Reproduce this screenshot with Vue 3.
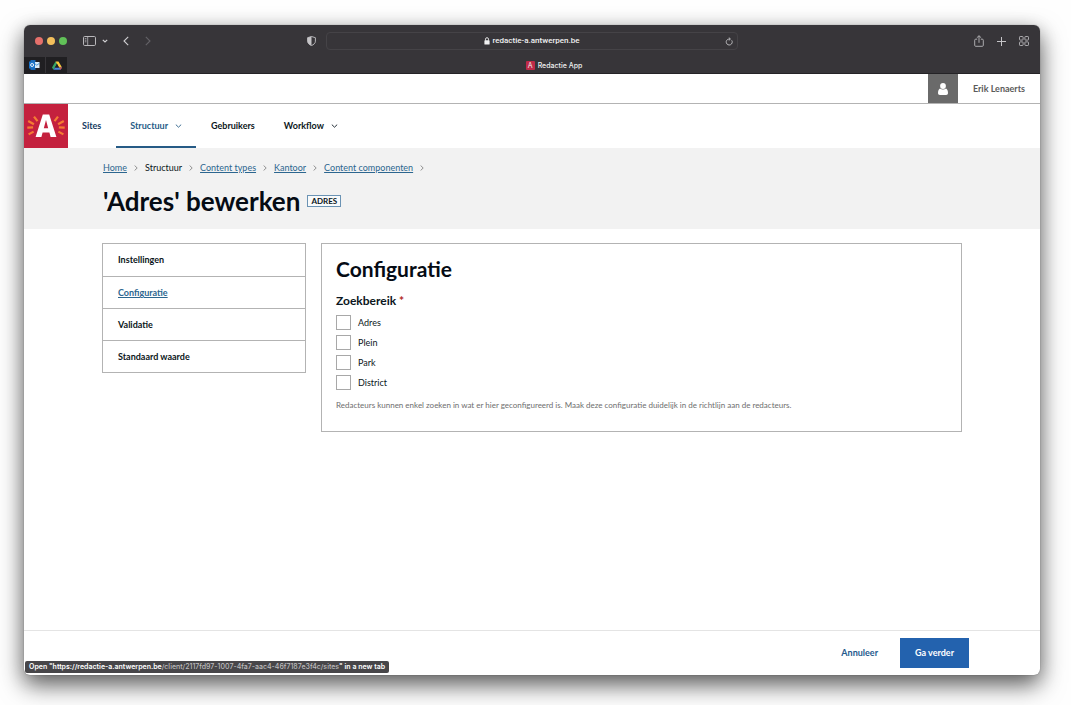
<script setup>
import { ref } from 'vue'

const navItems = [
  { label: 'Sites', tone: 'dark-blue' },
  { label: 'Structuur', tone: 'blue', active: true, menu: true },
  { label: 'Gebruikers' },
  { label: 'Workflow', menu: true },
]
const crumbs = [
  { label: 'Home', link: true },
  { label: 'Structuur' },
  { label: 'Content types', link: true },
  { label: 'Kantoor', link: true },
  { label: 'Content componenten', link: true },
]
const sections = ['Instellingen', 'Configuratie', 'Validatie', 'Standaard waarde']
const current = 'Configuratie'
const options = ['Adres', 'Plein', 'Park', 'District']
const chosen = ref([])
</script>

<template>
  <div class="desktop">
    <div class="window">
      <div class="toolbar">
        <div class="tools-left">
          <div class="lights"><i class="red"></i><i class="yellow"></i><i class="green"></i></div>
          <button class="tool sidebar-tool" aria-label="Sidebar">
            <svg width="13" height="10" viewBox="0 0 13 10" fill="none" stroke="#b9b8bb"><rect x=".5" y=".5" width="12" height="9" rx="1.2" /><path d="M4.7.5v9M1.8 2.6h1.6M1.8 4.2h1.6M1.8 5.8h1.6" stroke-width=".8" /></svg>
          </button>
          <button class="tool menu-tool" aria-label="Tab groups">
            <svg width="6" height="4" viewBox="0 0 6 4" fill="none" stroke="#d2d1d4" stroke-width="1.2"><path d="M.8.8 3 3 5.2.8" /></svg>
          </button>
          <button class="tool back-tool" aria-label="Back">
            <svg width="6" height="10" viewBox="0 0 6 10" fill="none" stroke="#cfced1" stroke-width="1.1"><path d="M5.2.8 1 5l4.2 4.2" /></svg>
          </button>
          <button class="tool" aria-label="Forward">
            <svg width="6" height="10" viewBox="0 0 6 10" fill="none" stroke="#646267" stroke-width="1.1"><path d="M.8.8 5 5 .8 9.2" /></svg>
          </button>
        </div>
        <div class="address-area">
          <svg class="shield" width="9" height="10" viewBox="0 0 9 10"><path d="M4.5.5 8.4 1.7v3.5c0 2-1.8 3.5-3.9 4.4C2.4 8.7.6 7.2.6 5.2V1.7z" fill="none" stroke="#c5c4c7" stroke-width=".9" /><path d="M4.5.5v9.1C2.4 8.7.6 7.2.6 5.2V1.7z" fill="#c5c4c7" /></svg>
          <div class="address">
            <span class="host">
              <svg width="6" height="8" viewBox="0 0 6 8"><rect x=".4" y="3.3" width="5.2" height="4.3" rx=".6" fill="#f0f0f1" /><path d="M1.5 3.6V2.2a1.5 1.5 0 0 1 3 0v1.4" fill="none" stroke="#f0f0f1" stroke-width=".9" /></svg>
              redactie-a.antwerpen.be
            </span>
            <button class="tool" aria-label="Reload">
              <svg width="8" height="9" viewBox="0 0 8 9" fill="none" stroke="#c5c4c7" stroke-width=".9"><path d="M6.7 3.3A3 3 0 1 1 4 2h1.2M3.8.5 5.4 2 3.8 3.5" /></svg>
            </button>
          </div>
        </div>
        <div class="tools-right">
          <button class="tool" aria-label="Share">
            <svg width="10" height="12" viewBox="0 0 10 12" fill="none" stroke="#b9b8bb" stroke-width=".9"><path d="M3.2 4.2H1.7a1 1 0 0 0-1 1v5.1a1 1 0 0 0 1 1h6.6a1 1 0 0 0 1-1V5.2a1 1 0 0 0-1-1H6.8M5 7.8V.8M2.8 2.8 5 .7l2.2 2.1" /></svg>
          </button>
          <button class="tool" aria-label="New tab">
            <svg width="9" height="9" viewBox="0 0 9 9" stroke="#c5c4c7"><path d="M4.5 0v9M0 4.5h9" /></svg>
          </button>
          <button class="tool" aria-label="Tab overview">
            <svg width="10" height="10" viewBox="0 0 10 10" fill="none" stroke="#b9b8bb" stroke-width=".9"><rect x=".5" y=".5" width="3.6" height="3.6" rx=".7" /><rect x="5.9" y=".5" width="3.6" height="3.6" rx=".7" /><rect x=".5" y="5.9" width="3.6" height="3.6" rx=".7" /><rect x="5.9" y="5.9" width="3.6" height="3.6" rx=".7" /></svg>
          </button>
        </div>
      </div>

      <div class="tabbar">
        <button class="pinned" aria-label="Outlook">
          <svg width="11" height="10" viewBox="0 0 11 10"><rect x="1.5" y="0" width="5" height="10" fill="#1767b5" /><rect x="5" y="2" width="5.5" height="6" fill="#d9ecfa" /><path d="m5 3.2 2.8 2 2.7-2" fill="none" stroke="#2c80c8" stroke-width=".8" /><rect x="0" y="1.5" width="6" height="7" fill="#1b73c7" /><circle cx="3.1" cy="5" r="1.5" fill="none" stroke="#fff" stroke-width=".9" /></svg>
        </button>
        <button class="pinned" aria-label="Drive">
          <svg width="10" height="9" viewBox="0 0 10 9"><path d="M3.5.5 0 6.4l1.5 2.3L5 2.8z" fill="#36a466" /><path d="M3.5.5h3L10 6.4H7z" fill="#f9c83c" /><path d="M1.5 8.7h7L10 6.4H3z" fill="#4485df" /><path d="M5 2.8 3 6.4h4z" fill="#201f22" /><path d="M7 6.4h3L8.5 8.7z" fill="#df5243" /></svg>
        </button>
        <div class="tab"><span class="favicon">A</span>Redactie App</div>
      </div>

      <div class="userbar">
        <span class="avatar">
          <svg width="10" height="12" viewBox="0 0 10 12" fill="#fff"><circle cx="5" cy="3" r="2.9" /><path d="M2 5.4c1.6 1.5 4.4 1.5 6 0 1.4.7 2 2.3 2 4.7 0 1.2-.7 1.9-1.9 1.9H1.9C.7 12 0 11.3 0 10.1c0-2.4.6-4 2-4.7z" /></svg>
        </span>
        <span class="user">Erik Lenaerts</span>
      </div>

      <header class="mainbar">
        <a href="#" class="logo" aria-label="Antwerpen">
          <svg width="44" height="44" viewBox="0 0 44 44"><rect width="44" height="44" fill="#c4213e" /><path d="m11.6 33 7.2-22.6h6.4L32.4 33h-5.8l-1.2-4.4h-6.8L17.4 33zm8.2-8.8h4.4L22 16z" fill="#fff" fill-rule="evenodd" /><path d="m10 12.6 3.5 4.6M4.2 17l5.7 3.3M3.3 23.6l5.8-.3M4.6 30.4l5-2.8M34 12.6l-3.5 4.6M39.8 17l-5.7 3.3M40.7 23.6l-5.8-.3M39.4 30.4l-5-2.8" stroke="#f57c33" stroke-width="2.2" /></svg>
        </a>
        <nav class="nav">
          <a v-for="item in navItems" :key="item.label" href="#" :class="['nav-item', item.tone, { active: item.active }]">
            {{ item.label }}
            <svg v-if="item.menu" width="7" height="4" viewBox="0 0 7 4" fill="none" stroke="currentColor" stroke-width=".9"><path d="m.8.6 2.7 2.6L6.2.6" /></svg>
          </a>
        </nav>
      </header>

      <div class="page-head">
        <nav class="crumbs" aria-label="Breadcrumb">
          <span v-for="crumb in crumbs" :key="crumb.label" class="crumb">
            <a v-if="crumb.link" href="#">{{ crumb.label }}</a>
            <span v-else>{{ crumb.label }}</span>
            <svg width="4" height="6" viewBox="0 0 4 6" fill="none" stroke="#777" stroke-width=".8"><path d="M.6.5 3.2 3 .6 5.5" /></svg>
          </span>
        </nav>
        <div class="title-row">
          <h1>'Adres' bewerken</h1>
          <span class="badge">ADRES</span>
        </div>
      </div>

      <main class="content">
        <nav class="side">
          <a v-for="section in sections" :key="section" href="#" :class="{ current: section === current }">{{ section }}</a>
        </nav>
        <section class="panel">
          <h2>Configuratie</h2>
          <fieldset>
            <legend>Zoekbereik <span class="required">*</span></legend>
            <label v-for="option in options" :key="option" class="option">
              <input v-model="chosen" type="checkbox" :value="option" />{{ option }}
            </label>
          </fieldset>
          <p class="hint">Redacteurs kunnen enkel zoeken in wat er hier geconfigureerd is. Maak deze configuratie duidelijk in de richtlijn aan de redacteurs.</p>
        </section>
      </main>

      <footer class="actions">
        <button class="cancel">Annuleer</button>
        <button class="next">Ga verder</button>
      </footer>

      <div class="status">Open "https://redactie-a.antwerpen.be<span>/client/2117fd97-1007-4fa7-aac4-46f7187e3f4c/sites</span>" in a new tab</div>
    </div>
  </div>
</template>

<style>
body {
  margin: 0;
  background: #fefefe;
}
</style>

<style scoped>
* {
  box-sizing: border-box;
}
button {
  padding: 0;
  border: 0;
  background: none;
  font: inherit;
  color: inherit;
}
svg {
  display: block;
  flex: none;
}
.desktop {
  display: flex;
  height: 100vh;
  padding: 25px 31px 30px 24px;
  overflow: hidden;
  font-family: Lato, "Open Sans", sans-serif;
  font-size: 9px;
  line-height: 12px;
  color: #0b1620;
}
.window {
  position: relative;
  display: flex;
  flex: 1;
  flex-direction: column;
  min-width: 0;
  border-radius: 6px;
  background: #fff;
  box-shadow: 0 0 1px rgba(0, 0, 0, 0.5), 0 10px 24px rgba(0, 0, 0, 0.6), 0 4px 18px rgba(0, 0, 0, 0.15);
}
.toolbar {
  display: grid;
  grid-template-columns: 1fr 450px 1fr;
  align-items: center;
  height: 32px;
  padding: 0 11px;
  border-radius: 6px 6px 0 0;
  background: #373539;
}
.tool {
  display: flex;
  align-items: center;
}
.tools-left,
.tools-right,
.lights,
.address-area {
  display: flex;
  align-items: center;
}
.lights {
  gap: 4px;
}
.lights i {
  width: 8px;
  height: 8px;
  border-radius: 50%;
}
.red {
  background: #e5706b;
}
.yellow {
  background: #f3bf5c;
}
.green {
  background: #61c158;
}
.sidebar-tool {
  margin-left: 16px;
}
.menu-tool {
  margin-left: 6px;
}
.back-tool {
  margin: 0 16px 0 15px;
}
.address-area {
  gap: 10px;
  padding-right: 19px;
}
.address {
  display: flex;
  flex: 1;
  align-items: center;
  height: 18px;
  padding: 0 4px 0 11px;
  border: 1px solid #454347;
  border-radius: 4px;
}
.host {
  display: flex;
  flex: 1;
  align-items: center;
  justify-content: center;
  gap: 3px;
  font: 500 8px/12px Roboto, sans-serif;
  color: #f0f0f1;
}
.tools-right {
  justify-content: flex-end;
  gap: 13px;
}
.tabbar {
  display: flex;
  align-items: stretch;
  height: 17px;
  background: #373539;
  border-bottom: 1px solid #242326;
}
.pinned {
  display: flex;
  align-items: center;
  justify-content: center;
  width: 22px;
  background: #201f22;
  border-right: 1px solid #373539;
}
.tab {
  display: flex;
  flex: 1;
  align-items: center;
  justify-content: center;
  gap: 3px;
  padding-top: 1px;
  font: 500 7px/10px Inter, sans-serif;
  color: #f0f0f1;
}
.favicon {
  width: 9px;
  border-radius: 1px;
  background: #bf2a48;
  text-align: center;
  font-weight: 400;
  line-height: 9px;
}
.userbar {
  display: flex;
  justify-content: flex-end;
  height: 30px;
  border-bottom: 1px solid #b3b3b3;
}
.avatar {
  display: flex;
  align-items: center;
  justify-content: center;
  width: 30px;
  background: #6a6a6a;
}
.user {
  padding: 0 15px;
  font-weight: 700;
  line-height: 29px;
  color: #5b5b5b;
}
.mainbar {
  display: flex;
  height: 44px;
}
.nav {
  display: flex;
  gap: 1px;
}
.nav-item {
  display: flex;
  align-items: center;
  gap: 7px;
  padding: 2px 14px 0;
  border-bottom: 2px solid transparent;
  font-weight: 700;
  color: #0b1620;
  text-decoration: none;
}
.dark-blue {
  color: #143a61;
}
.blue {
  color: #265b86;
}
.active {
  border-color: #265b86;
}
.page-head {
  height: 81px;
  padding: 14px 79px 0;
  background: #f2f2f2;
}
.crumbs,
.crumb {
  display: flex;
  align-items: center;
  gap: 7px;
}
.crumb a {
  color: #2c668f;
}
.title-row {
  display: flex;
  align-items: center;
  gap: 7px;
  margin-top: 11px;
}
h1,
h2 {
  margin: 0;
  font-size: 26px;
  line-height: 32px;
  font-weight: 700;
  color: #050b14;
}
.badge {
  padding: 0 3px;
  border: 1px solid #6b93b4;
  background: #f8fafb;
  font-size: 8px;
  line-height: 10px;
  font-weight: 700;
}
.content {
  display: grid;
  flex: 1;
  grid-template-columns: 204px 1fr;
  gap: 15px;
  align-items: start;
  padding: 14px 78px;
}
.side {
  border: 1px solid #b3b3b3;
}
.side a {
  display: block;
  height: 32px;
  padding: 0 15px;
  font-weight: 700;
  line-height: 32px;
  color: #0b1620;
  text-decoration: none;
}
.side a + a {
  border-top: 1px solid #b3b3b3;
}
.side .current {
  color: #2c668f;
  text-decoration: underline;
}
.panel {
  padding: 11px 14px 20px;
  border: 1px solid #b3b3b3;
}
h2 {
  margin-bottom: 10px;
  font-size: 21px;
  line-height: 28px;
}
fieldset {
  display: flex;
  flex-direction: column;
  gap: 5px;
  min-width: 0;
  margin: 0;
  padding: 0;
  border: 0;
}
legend {
  padding: 0 0 6px;
  font-size: 12px;
  line-height: 16px;
  font-weight: 700;
}
.required {
  font-weight: 900;
  color: #b5302c;
}
.option {
  display: flex;
  align-items: center;
  gap: 7px;
  height: 15px;
}
.option input {
  width: 15px;
  height: 15px;
  margin: 0;
  border: 1px solid #a8a8a8;
  background: #fff;
  appearance: none;
}
.option input:checked {
  background: #2362ae;
}
.hint {
  margin: 9px 0 0;
  font-size: 8px;
  color: #6e6e6e;
}
.actions {
  display: flex;
  align-items: center;
  justify-content: flex-end;
  gap: 22px;
  height: 45px;
  padding-right: 71px;
  border-top: 1px solid #e4e4e4;
  font-weight: 700;
}
.cancel {
  color: #24598c;
}
.next {
  height: 30px;
  padding: 0 15px;
  background: #2362ae;
  color: #fff;
}
.status {
  position: absolute;
  bottom: 2px;
  left: 1px;
  padding: 0 4px;
  border-radius: 2px;
  background: #474649;
  font: 600 7px/12px Inter, sans-serif;
  white-space: nowrap;
  color: #fff;
}
.status span {
  font-weight: 500;
  color: #bdbcbe;
}
</style>
